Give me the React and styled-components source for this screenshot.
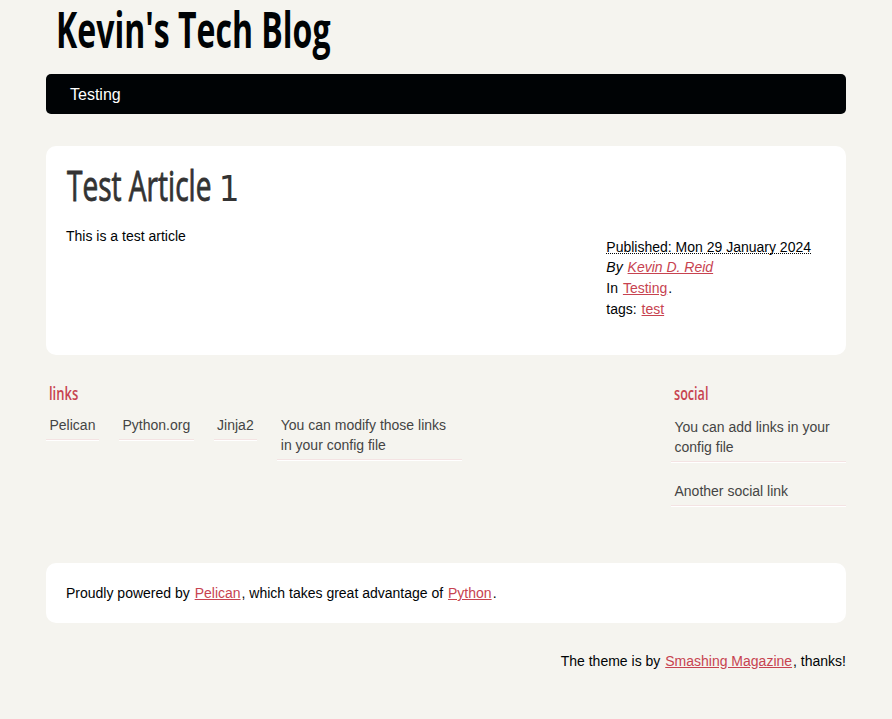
import React from "react";
import styled, { createGlobalStyle } from "styled-components";

const GlobalStyle = createGlobalStyle`
  *, *::before, *::after { box-sizing: border-box; }
  body {
    margin: 0;
    background: #f5f4ef;
    color: #000305;
    font: 14px/20px "Liberation Sans", Arial, sans-serif;
  }
  h1, h2, h3, p, ul, address { margin: 0; padding: 0; }
  ul { list-style: none; }
`;

const Page = styled.div`
  width: 800px;
  height: 719px;
  margin: 0 auto;
`;

const Condensed = styled.span`
  display: block;
  width: max-content;
  white-space: nowrap;
  transform: scaleX(${(p) => p.$scale});
  transform-origin: 0 50%;
`;

const LowNumeral = styled.span`
  display: inline-block;
  font: 400 35px/38px "DejaVu Sans", sans-serif;
  -webkit-text-stroke: 0;
  transform: scaleX(1.4);
  transform-origin: 0 50%;
`;

const SiteTitle = styled.h1`
  height: 74px;
  padding: 0 0 0 10px;
  font: 700 51px/56px "Open Sans", sans-serif;
`;

const Nav = styled.nav`
  height: 40px;
  padding-left: 24px;
  border-radius: 5px;
  background: #000305;
  color: #fff;
  font-size: 16px;
  line-height: 41px;
`;

const Card = styled.section`
  border-radius: 10px;
  background: #fff;
`;

const Article = styled(Card)`
  height: 209px;
  margin-top: 32px;
  padding: 20px;
`;

const ArticleTitle = styled.h2`
  height: 60px;
  padding-left: 1px;
  color: #333;
  font: 400 42px/38px "Open Sans", sans-serif;
  -webkit-text-stroke: 0.9px #333;
`;

const ArticleBody = styled.div`
  display: flex;
  justify-content: space-between;
`;

const PostInfo = styled.footer`
  width: 219.7px;
  padding-top: 11px;
  line-height: 21px;
`;

const Published = styled.div`
  height: 20px;
  line-height: 20px;
`;

const Abbr = styled.abbr`
  text-decoration: none;
  border-bottom: 1px dotted #000305;
  display: inline-block;
  height: 17px;
`;

const Link = styled.a`
  padding: 0 1px;
  color: #c74350;
  text-decoration: underline;
`;

const Extras = styled.section`
  display: flex;
  justify-content: space-between;
  height: 208px;
  padding-top: 26px;
`;

const Social = styled.div`
  width: 175px;
`;

const ExtrasTitle = styled.h3`
  height: ${(p) => p.$height}px;
  padding-left: 3px;
  color: #c74350;
  font: 600 18px/25px "Open Sans", sans-serif;
`;

const LinkRow = styled.ul`
  display: flex;
  align-items: flex-start;
  gap: 20px;
`;

const LinkColumn = styled.ul`
  display: grid;
  gap: 14px;
`;

const LinkItem = styled.li`
  width: ${(p) => p.$width || "auto"};
  border-bottom: 1px solid #fff;
`;

const ExtraLink = styled.a`
  display: block;
  padding: 4px 3.5px;
  border-bottom: 1px solid #f4e3e3;
  color: #444;
`;

const About = styled(Card)`
  height: 60px;
  padding: 20px;
`;

const Credit = styled.p`
  margin-top: 28px;
  text-align: right;
`;

const blogroll = [
  { label: "Pelican", width: "53px" },
  { label: "Python.org", width: "74.6px" },
  { label: "Jinja2", width: "43.7px" },
  { label: "You can modify those links in your config file", width: "185px" },
];

const social = ["You can add links in your config file", "Another social link"];

export default function App() {
  return (
    <>
      <GlobalStyle />
      <Page>
        <SiteTitle><Condensed $scale={0.628}>Kevin's Tech Blog</Condensed></SiteTitle>
        <Nav>Testing</Nav>
        <Article>
          <ArticleTitle><Condensed $scale={0.668}>Test Article <LowNumeral>1</LowNumeral></Condensed></ArticleTitle>
          <ArticleBody>
            <p>This is a test article</p>
            <PostInfo>
              <Published><Abbr>Published: Mon 29 January 2024</Abbr></Published>
              <address>By <Link>Kevin D. Reid</Link></address>
              <p>In <Link>Testing</Link>.</p>
              <p>tags: <Link>test</Link></p>
            </PostInfo>
          </ArticleBody>
        </Article>
        <Extras>
          <div>
            <ExtrasTitle $height={30}><Condensed $scale={0.72}>links</Condensed></ExtrasTitle>
            <LinkRow>
              {blogroll.map((item) => (
                <LinkItem key={item.label} $width={item.width}>
                  <ExtraLink>{item.label}</ExtraLink>
                </LinkItem>
              ))}
            </LinkRow>
          </div>
          <Social>
            <ExtrasTitle $height={32}><Condensed $scale={0.7}>social</Condensed></ExtrasTitle>
            <LinkColumn>
              {social.map((label) => (
                <LinkItem key={label}><ExtraLink>{label}</ExtraLink></LinkItem>
              ))}
            </LinkColumn>
          </Social>
        </Extras>
        <About>
          Proudly powered by <Link>Pelican</Link>, which takes great advantage of <Link>Python</Link>.
        </About>
        <Credit>The theme is by <Link>Smashing Magazine</Link>, thanks!</Credit>
      </Page>
    </>
  );
}
